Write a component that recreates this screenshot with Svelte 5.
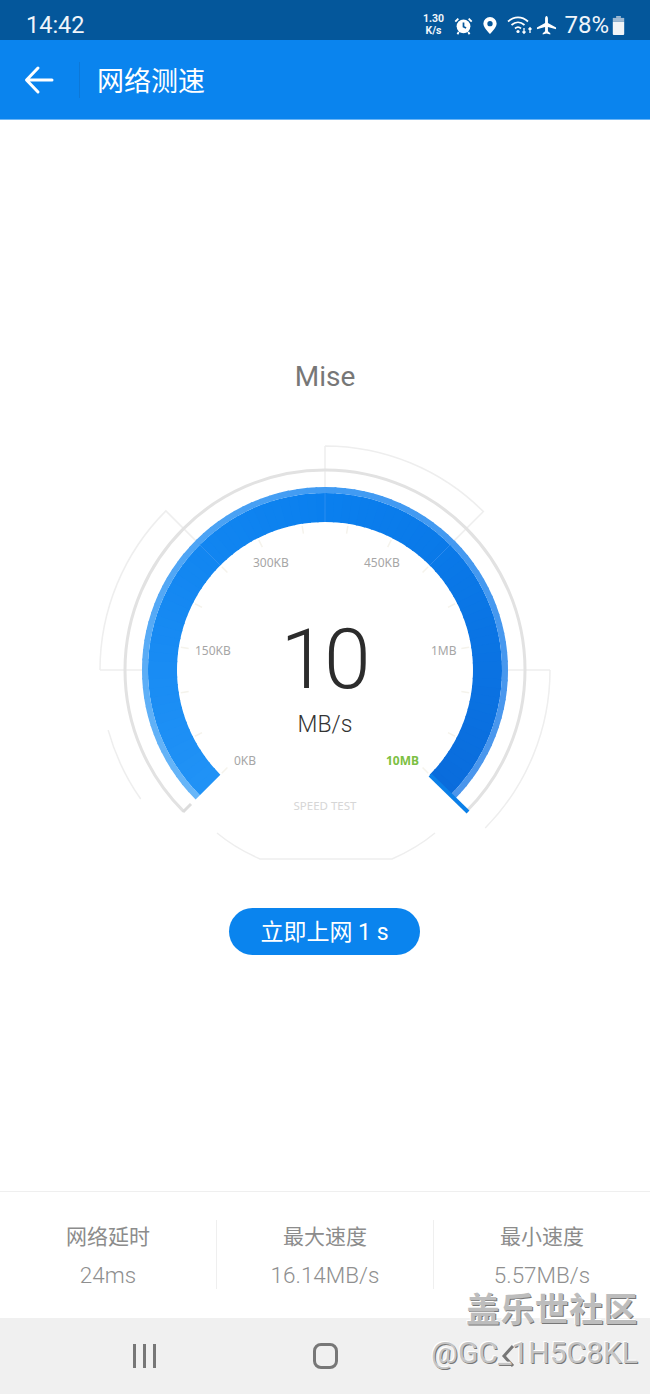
<script>
  const cx = 250;
  const cy = 230;

  // point on a circle, angle in degrees clockwise from 12 o'clock
  function pt(r, deg) {
    const a = ((deg - 90) * Math.PI) / 180;
    return [cx + r * Math.cos(a), cy + r * Math.sin(a)];
  }

  function arc(r, from, to) {
    const [x1, y1] = pt(r, from);
    const [x2, y2] = pt(r, to);
    const large = to - from > 180 ? 1 : 0;
    return `M${x1.toFixed(2)} ${y1.toFixed(2)}A${r} ${r} 0 ${large} 1 ${x2.toFixed(2)} ${y2.toFixed(2)}`;
  }

  // three stop gradient along the dial: t 0..1, the middle stop is at the top
  function ramp(a, b, c, t) {
    const from = t < 0.5 ? a : b;
    const to = t < 0.5 ? b : c;
    const k = t < 0.5 ? t * 2 : (t - 0.5) * 2;
    const v = from.map((n, i) => Math.round(n + (to[i] - n) * k));
    return `rgb(${v[0]},${v[1]},${v[2]})`;
  }

  const segments = [];
  for (let d = -135; d < 135; d += 3) {
    const t = (d + 135) / 270;
    segments.push({
      main: arc(162.5, d, Math.min(d + 3.6, 135)),
      rim: arc(180, d, Math.min(d + 3.6, 135)),
      mainColor: ramp([32, 146, 246], [10, 127, 238], [10, 108, 220], t),
      rimColor: ramp([104, 182, 248], [64, 155, 243], [76, 150, 236], t)
    });
  }

  const ticks = [];
  for (let d = -135; d <= 135; d += 18) {
    const [x1, y1] = pt(138, d);
    const [x2, y2] = pt(146, d);
    ticks.push({ x1, y1, x2, y2 });
  }

  const labels = [
    { text: '0KB', x: 159, y: 325 },
    { text: '150KB', x: 120, y: 215 },
    { text: '300KB', x: 178, y: 127 },
    { text: '450KB', x: 289, y: 127 },
    { text: '1MB', x: 356, y: 215 },
    { text: '10MB', x: 311, y: 325, green: true }
  ];

  const sectors = [
    `${arc(224, 0, 45)}L${pt(148, 45).map((v) => v.toFixed(1)).join(' ')}M250 82V6`,
    `${arc(225, -90, -45)}L${pt(148, -45).map((v) => v.toFixed(1)).join(' ')}M25 230H102`,
    `${arc(225, 90, 134.6)}M475 230H398`,
    arc(225, -125, -105.5)
  ];

  const stats = [
    { label: '网络延时', value: '24ms' },
    { label: '最大速度', value: '16.14MB/s' },
    { label: '最小速度', value: '5.57MB/s' }
  ];
</script>

<div class="page">
  <div class="statusbar">
    <span class="time">14:42</span>
    <div class="status-right">
      <div class="netspeed"><div>1.30</div><div>K/s</div></div>
      <svg class="ic alarm" width="19" height="19" viewBox="0 0 22 22">
        <circle cx="11" cy="12" r="8" fill="#fff" />
        <path d="M11 7.500v5l3 1.500" fill="none" stroke="#04579b" stroke-width="2" />
        <path d="M1.500 6.500 5 3M20.500 6.500 17 3M5.500 18.500 4 21M16.500 18.500 18 21" stroke="#fff" stroke-width="2.200" fill="none" />
      </svg>
      <svg class="ic pin" width="16" height="19" viewBox="0 0 16 20">
        <path fill-rule="evenodd" d="M8 1a7 7 0 0 0-7 7c0 4.600 7 11 7 11s7-6.400 7-11a7 7 0 0 0-7-7Zm0 4.300a2.800 2.800 0 1 1 0 5.600 2.800 2.800 0 0 1 0-5.600Z" fill="#fff" />
      </svg>
      <svg class="ic wifi" width="26" height="20" viewBox="0 0 26 20">
        <path d="M1 6.500C7 1 15 1 21 6.500M4.500 10c4-3.500 9-3.500 13 0M8 13.500c2-1.700 4-1.700 6 0" fill="none" stroke="#fff" stroke-width="1.700" />
        <circle cx="11" cy="16.500" r="1.600" fill="#fff" />
        <path d="M17 13v5M15.500 16.500l1.500 1.800 1.500-1.800M23 18v-5M21.500 14.500l1.500-1.800 1.500 1.800" fill="none" stroke="#fff" stroke-width="1.300" />
      </svg>
      <svg class="ic plane" width="21" height="21" viewBox="0 0 22 22">
        <path d="M11 1c1 0 1.500 1.500 1.500 3v4.500L21 13v2l-8.500-2.500V17l2.500 2v1.500L11 19.500 7 20.500V19l2.500-2v-4.500L1 15v-2l8.500-4.500V4C9.500 2.500 10 1 11 1Z" fill="#fff" />
      </svg>
      <span class="battery-text">78%</span>
      <svg class="ic battery" width="13" height="19" viewBox="0 0 12 20">
        <path d="M3.500 0h5v2h-5z" fill="#9fb9d2" />
        <path d="M0 2h12v4H0z" fill="#9fb9d2" />
        <path d="M0 6h12v13a1 1 0 0 1-1 1H1a1 1 0 0 1-1-1z" fill="#f1f4f7" />
      </svg>
    </div>
  </div>

  <header class="appbar">
    <svg class="back" width="30" height="30" viewBox="0 0 30 30">
      <path d="M28 15H3M14 3 2.500 15 14 27" fill="none" stroke="#fff" stroke-width="3" stroke-linecap="round" stroke-linejoin="round" />
    </svg>
    <span class="divider"></span>
    <h1>网络测速</h1>
  </header>

  <main>
    <div class="ssid">Mise</div>

    <svg class="gauge" width="500" height="430" viewBox="0 0 500 430">
      {#each sectors as d}
        <path {d} fill="none" stroke="#eeeeee" stroke-width="1.500" />
      {/each}
      <path d="M142 393Q160 408 185 419H317Q342 408 360 393" fill="none" stroke="#eeeeee" stroke-width="1.500" />

      <path d={arc(200, -135, 135)} fill="none" stroke="#e2e2e2" stroke-width="3" />
      <path d="M108 372l8-8" stroke="#dcdcdc" stroke-width="3" fill="none" />

      {#each ticks as t}
        <line x1={t.x1} y1={t.y1} x2={t.x2} y2={t.y2} stroke="#f5f3ec" stroke-width="1.500" />
      {/each}

      {#each segments as s}
        <path d={s.main} fill="none" stroke={s.mainColor} stroke-width="29" />
      {/each}
      {#each segments as s}
        <path d={s.rim} fill="none" stroke={s.rimColor} stroke-width="6" />
      {/each}

      <path d="M250 48V82" stroke="#4d9df2" stroke-width="1" opacity="0.5" />
      <path d="M355 125 379 101" stroke="#4d9df2" stroke-width="1" opacity="0.5" />
      <path d="M145 125 121 101" stroke="#4d9df2" stroke-width="1" opacity="0.5" />
      <path d="M355 335 393 372" stroke="#0a7fe8" stroke-width="4" />

      {#each labels as l}
        <text class="tick-label" class:green={l.green} x={l.x} y={l.y}>{l.text}</text>
      {/each}

      <text class="value" x="249" y="248" text-anchor="middle">10</text>
      <text class="unit" x="250" y="292" text-anchor="middle">MB/s</text>
      <text class="caption" x="250" y="370" text-anchor="middle">SPEED TEST</text>
    </svg>

    <button class="go">立即上网 1 s</button>
  </main>

  <section class="stats">
    {#each stats as s}
      <div class="stat">
        <div class="stat-label">{s.label}</div>
        <div class="stat-value">{s.value}</div>
      </div>
    {/each}
  </section>

  <nav class="navbar">
    <span class="bars"><i></i><i></i><i></i></span>
    <span class="home"></span>
    <svg class="chev" width="14" height="24" viewBox="0 0 14 24">
      <path d="M12 2 3 12l9 10" fill="none" stroke="#777" stroke-width="3" />
    </svg>
  </nav>

  <div class="watermark">
    <div class="wm-title">盖乐世社区</div>
    <div class="wm-id">@GC_1H5C8KL</div>
  </div>
</div>

<style>
  :global(body) {
    background: #fff;
  }

  .page {
    position: relative;
    display: flex;
    flex-direction: column;
    width: 650px;
    height: 1394px;
    overflow: hidden;
    font-family: Roboto, 'Noto Sans CJK SC', sans-serif;
  }

  .statusbar {
    display: flex;
    align-items: center;
    justify-content: space-between;
    height: 40px;
    box-sizing: border-box;
    padding: 10px 25px 0 26px;
    background: #04579b;
    color: #f0f5fa;
  }

  .time {
    font-size: 23.500px;
  }

  .status-right {
    display: flex;
    align-items: center;
  }

  .netspeed {
    width: 24px;
    font-size: 10.500px;
    font-weight: 700;
    line-height: 12.500px;
    text-align: center;
  }

  .ic {
    display: block;
  }

  .alarm {
    margin-left: 9px;
  }

  .pin {
    margin-left: 9px;
  }

  .wifi {
    margin-left: 9px;
  }

  .plane {
    margin-left: 3px;
  }

  .battery-text {
    font-size: 24px;
    margin-left: 7px;
  }

  .battery {
    margin-left: 3px;
  }

  .appbar {
    display: flex;
    align-items: center;
    height: 79px;
    background: #0a84ee;
    border-bottom: 1px solid #6db6f5;
  }

  .back {
    margin-left: 24px;
  }

  .divider {
    width: 1px;
    height: 36px;
    margin-left: 25px;
    background: #0c78d8;
  }

  h1 {
    margin: 0 0 0 17px;
    font-size: 27px;
    font-weight: 400;
    color: #fff;
  }

  main {
    flex: 1;
    display: flex;
    flex-direction: column;
    align-items: center;
    padding-top: 237px;
  }

  .ssid {
    height: 40px;
    line-height: 40px;
    font-size: 28px;
    color: #777;
    margin-bottom: 43px;
  }

  .gauge {
    display: block;
    font-family: 'Noto Sans', Roboto, sans-serif;
  }

  .tick-label {
    font-size: 12px;
    fill: #a6a6a6;
  }

  .tick-label.green {
    fill: #7cc043;
    font-weight: 700;
  }

  .value {
    font-family: Roboto, sans-serif;
    font-size: 84px;
    font-weight: 300;
    letter-spacing: -3px;
    fill: #2c2c2c;
  }

  .unit {
    font-family: Roboto, sans-serif;
    font-size: 23px;
    font-weight: 300;
    fill: #333;
  }

  .caption {
    font-size: 11.500px;
    fill: #d6d6d6;
  }

  .go {
    width: 191px;
    height: 47px;
    margin: 38px 1px 0 0;
    padding: 0 0 3px;
    border: none;
    border-radius: 24px;
    background: #0a84ee;
    color: #fff;
    font-family: inherit;
    font-size: 23px;
  }

  .stats {
    display: grid;
    grid-template-columns: 216px 217px 217px;
    height: 127px;
    padding-top: 28px;
    box-sizing: border-box;
    border-top: 1px solid #efefef;
  }

  .stat {
    height: 69px;
    text-align: center;
    border-left: 1px solid #efefef;
  }

  .stat:first-child {
    border-left: none;
  }

  .stat-label {
    font-size: 21px;
    line-height: 26px;
    margin-top: 4px;
    color: #8c8c8c;
  }

  .stat-value {
    font-size: 22.500px;
    font-weight: 300;
    line-height: 26px;
    margin-top: 12px;
    color: #8f8f8f;
  }

  .navbar {
    position: relative;
    display: flex;
    align-items: center;
    height: 76px;
    background: #f0f0f0;
  }

  .bars {
    display: flex;
    gap: 7px;
    margin-left: 133px;
  }

  .bars i {
    display: block;
    width: 3px;
    height: 24px;
    background: #777;
  }

  .home {
    width: 19px;
    height: 20px;
    margin-left: 157px;
    border: 3px solid #777;
    border-radius: 8px;
  }

  .chev {
    margin-left: 163px;
  }

  .watermark {
    position: absolute;
    right: 12px;
    bottom: 24px;
    text-align: right;
    pointer-events: none;
  }

  .wm-title {
    font-size: 34px;
    line-height: 34px;
    font-weight: 700;
    letter-spacing: 0.400px;
    color: #bdbdbd;
    text-shadow: -1px -1px 0 #fff, 1px 1px 0 #777;
  }

  .wm-id {
    margin-top: 9px;
    font-size: 30px;
    line-height: 34px;
    color: #c4c4c4;
    text-shadow: -1px -1px 0 #fff, 1px 1px 0 #777;
  }
</style>
